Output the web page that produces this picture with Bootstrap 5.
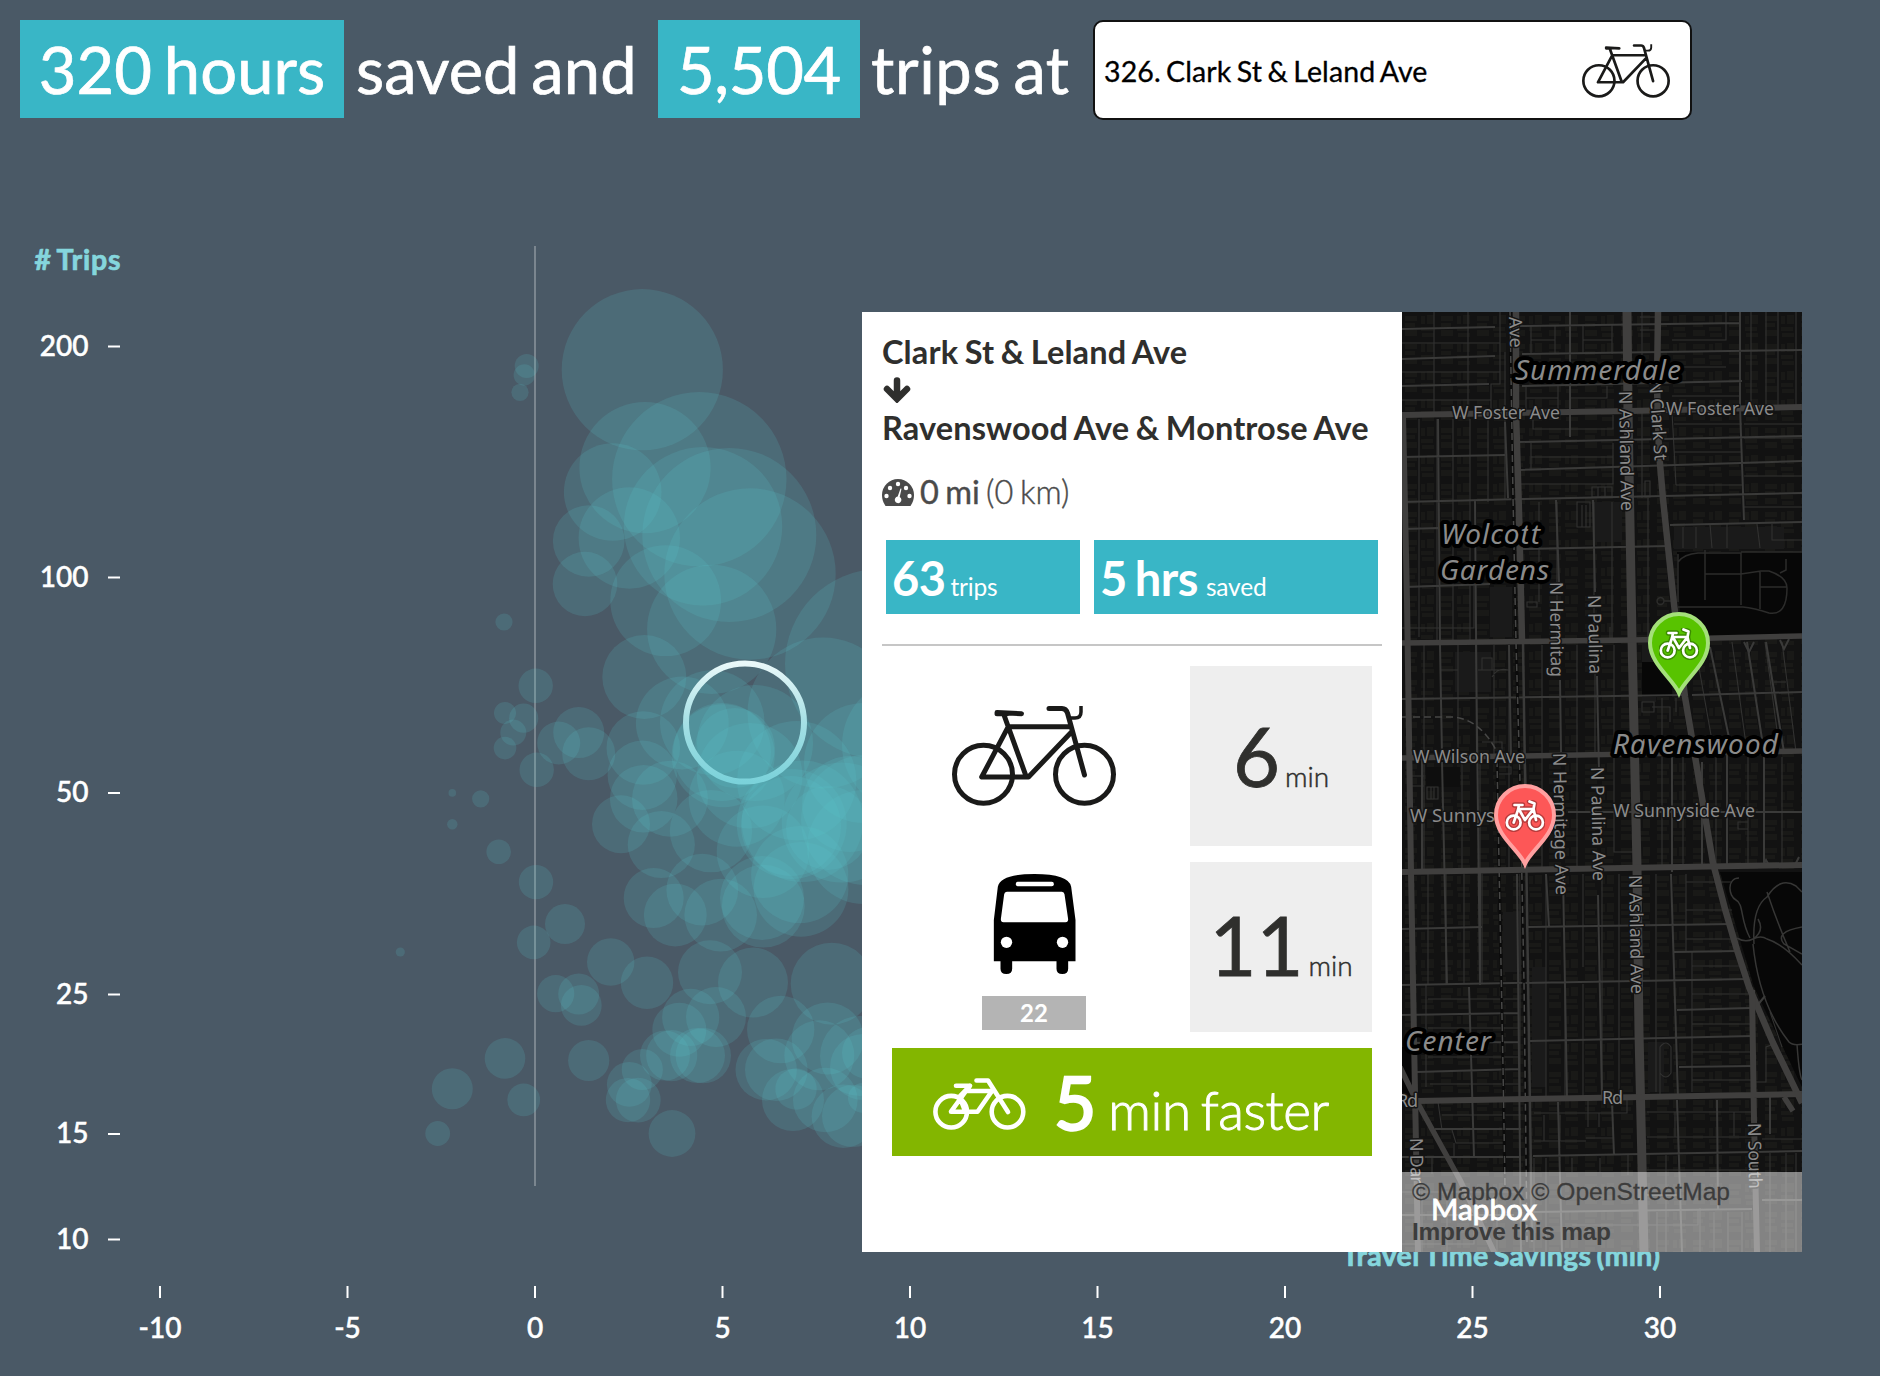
<!DOCTYPE html>
<html lang="en">
<head>
<meta charset="utf-8">
<meta name="viewport" content="width=device-width, initial-scale=1">
<title>Trips at Clark St &amp; Leland Ave</title>
<link href="https://cdn.jsdelivr.net/npm/bootstrap@5.3.0/dist/css/bootstrap.min.css" rel="stylesheet">
<script src="https://cdn.jsdelivr.net/npm/bootstrap@5.3.0/dist/js/bootstrap.bundle.min.js"></script>
<style>
body{background:#4a5966;color:#fff;font-family:Lato,sans-serif;width:1880px;height:1376px;overflow:hidden;position:relative}
.headline{height:140px;padding:20px 0 0 20px;font-size:65px;line-height:99px;white-space:nowrap;word-spacing:-5px;letter-spacing:.1px;-webkit-text-stroke:.7px currentColor}
.teal{background:#39b6c6;color:#fff}
.hl-a{width:324px;height:98px;text-align:center}
.hl-b{width:202px;height:98px;text-align:center;letter-spacing:-.3px}
.hl-t1{width:314px;padding-left:12px}
.hl-t2{width:233px;padding-left:11px;letter-spacing:.6px}
.station{width:599px;height:100px;border:2px solid #111;border-radius:10px;background:#fff;color:#000;font-size:28.500px;line-height:32px;letter-spacing:.1px;word-spacing:-2px;-webkit-text-stroke:.3px currentColor;padding:2px 20px 0 9px}
.plot{display:block;width:1880px;height:1236px}
.axis{font:500 28px Lato,sans-serif;fill:#fff;stroke:#fff;stroke-width:.5px}
.axis-title{font:700 28.500px Lato,sans-serif;fill:#85d6dd;stroke:#85d6dd;stroke-width:.7px;word-spacing:-2px}
.popcard{left:862px;top:312px;width:940px;height:940px;background:#fff;color:#2f2f2d}
.info{width:540px;height:940px;padding:20px 20px 0 20px}
.place{font-size:32.500px;font-weight:700;line-height:40px;white-space:nowrap;word-spacing:-1.500px;letter-spacing:.12px}
.arrow-row{height:36px;line-height:0;padding:5px 0 0 1px}
.dist{font-size:32.500px;line-height:40px;margin-top:24px;color:#4a4a4a;word-spacing:-2px;-webkit-text-stroke:.4px currentColor}
.dist svg{margin-right:6px}
.dist span{font-weight:300;letter-spacing:0}
.tiles{margin:28px 4px 0;gap:14px}
.tile{height:74px;padding-left:6px;line-height:76px;white-space:nowrap}
.tile b{font-size:47px;font-weight:700;letter-spacing:-.5px;word-spacing:-3px}
.tile span{font-size:24.500px;letter-spacing:-.2px}
.rule{height:2px;background:#c6c6c6;margin-top:30px}
.modes{margin:20px 10px 0 10px}
.mode-pic{width:284px}
.timebox{width:182px;background:#eee;white-space:nowrap}
.timebox b{font-size:81px;font-weight:400;line-height:80px;-webkit-text-stroke:.8px currentColor}
.timebox span{font-size:28px;font-weight:300;margin-left:5px;-webkit-text-stroke:.5px currentColor}
.route{width:104px;height:34px;background:#b4b4b4;color:#fff;font-size:24px;font-weight:700;line-height:34px;text-align:center}
.faster{height:108px;margin:16px 10px 0;background:#83b600;color:#fff;white-space:nowrap}
.faster b{font-size:73px;font-weight:400;line-height:108px;-webkit-text-stroke:2.500px currentColor}
.faster span{font-size:53px;font-weight:300;word-spacing:-4px;letter-spacing:-.4px;-webkit-text-stroke:1px currentColor}
.citymap{width:400px;height:940px;display:block}
.hood{font:italic 28px "Noto Sans",sans-serif;fill:#8b8b8b;stroke:#000;stroke-width:8px;stroke-linejoin:round;paint-order:stroke}
.road{font:18px "Noto Sans",sans-serif;fill:#8b8b8b;stroke:#141414;stroke-width:3px;stroke-linejoin:round;paint-order:stroke}
</style>
</head>
<body>
<svg width="0" height="0" class="position-absolute" aria-hidden="true">
 <symbol id="bike" viewBox="0 0 164 100">
  <g fill="none" stroke="#1a1a19" stroke-width="5" stroke-linecap="round" stroke-linejoin="round">
   <circle cx="31.5" cy="68.3" r="29"/><circle cx="132.5" cy="68.3" r="29"/>
   <path d="M45 6.5l24.500 1.200M45 7.700h10M52 9l22 61M56.300 20.700H118M56.300 20.700L29.700 71H76.500L119.500 26M97 2.500h13q4 0 5.500 4.500L132.500 69"/>
   <path d="M129 0v6q0 6-6 6h-6" stroke-width="3.500" stroke-linecap="butt"/>
  </g>
 </symbol>
 <symbol id="pinbike" viewBox="0 0 40 32">
  <g fill="none" stroke-linecap="round" stroke-linejoin="round">
   <circle cx="8.700" cy="22.500" r="6.900"/><circle cx="31" cy="22.500" r="6.900"/><path d="M9.500 5h8M14 5l-1 5L8.700 22.500M13.500 8.500L20 20L28.500 9H14M24.500 1.500l5 2L28.500 9L31 20"/>
  </g>
 </symbol>
</svg>

<header class="headline d-flex align-items-start">
 <div class="teal hl-a">320 hours</div>
 <div class="hl-t1">saved and</div>
 <div class="teal hl-b">5,504</div>
 <div class="hl-t2">trips at</div>
 <div class="station d-flex align-items-center justify-content-between"><span>326. Clark St &amp; Leland Ave</span><svg width="88" height="54"><use href="#bike"/></svg></div>
</header>

<main>
<svg class="plot" viewBox="0 140 1880 1236">
 <defs><linearGradient id="ring" x1="0" y1="0" x2="0" y2="1"><stop offset="0" stop-color="#e9f8f9"/><stop offset=".5" stop-color="#a5e0e5"/><stop offset="1" stop-color="#7bd2da"/></linearGradient></defs>
 <path d="M535 246V1186" stroke="#fff" stroke-opacity=".27" stroke-width="2"/>
 <g id="bubbles" fill="#5bc6d0" fill-opacity=".165"></g>
 <circle cx="745" cy="722.600" r="59" fill="none" stroke="url(#ring)" stroke-width="6"/>
 <text class="axis-title" x="34.500" y="270" textLength="86">#&#160;Trips</text>
 <text class="axis-title" x="1342" y="1266" textLength="318">Travel Time Savings (min)</text>
 <g id="axes" stroke="#fff" stroke-width="2"></g>
 <g id="axisText" class="axis"></g>
</svg>
</main>

<section class="popcard d-flex position-absolute">
 <div class="info">
  <div class="place">Clark St &amp; Leland Ave</div>
  <div class="arrow-row"><svg width="28" height="26" viewBox="0 0 28 26"><path d="M14 3.500V20M4 12L14 22L24 12" fill="none" stroke="#2f2f2d" stroke-width="6.500" stroke-linecap="round"/></svg></div>
  <div class="place">Ravenswood Ave &amp; Montrose Ave</div>
  <div class="dist d-flex align-items-center"><svg width="32" height="27" viewBox="0 0 32 27"><path d="M3.500 27Q0 22 0 16a16 16 0 0 1 32 0q0 6-3.500 11z" fill="#4a4a4a"/><g fill="#fff"><circle cx="4.500" cy="17" r="2.200"/><circle cx="8" cy="9" r="2.200"/><circle cx="16" cy="5" r="2.200"/><circle cx="24" cy="9" r="2.200"/><circle cx="27.500" cy="17" r="2.200"/><path d="M18.500 9.500l1 .3L17.700 18a3.300 3.300 0 1 1-2-.4z"/></g></svg>0 mi&#160;<span>(0 km)</span></div>
  <div class="tiles d-flex">
   <div class="tile teal" style="width:194px"><b>63</b><span style="margin-left:5px">trips</span></div>
   <div class="tile teal flex-grow-1"><b>5 hrs</b> <span style="margin-left:4px">saved</span></div>
  </div>
  <div class="rule"></div>
  <div class="modes d-flex justify-content-between" style="height:180px">
   <div class="mode-pic d-flex justify-content-center" style="padding-top:40px"><svg width="164" height="100" class="flex-shrink-0"><use href="#bike"/></svg></div>
   <div class="timebox d-flex justify-content-center align-items-center"><div><b>6</b><span>min</span></div></div>
  </div>
  <div class="modes d-flex justify-content-between" style="height:170px;margin-top:16px">
   <div class="mode-pic d-flex flex-column align-items-center" style="padding-top:12px">
    <svg width="83" height="100" viewBox="0 0 248 300"><path d="M2 138L14 38Q22 0 124 0T234 38L247 138V262H225V284q0 16-17.500 16T190 284V262H57V284q0 16-17.500 16T22 284V262H2z"/><g fill="#fff"><rect x="68" y="23" width="114" height="14" rx="6"/><path d="M41 53H206q7 0 8 8L225 136q0 9-8 9H31q-8 0-8-9L33 61q1-8 8-8z"/><circle cx="40" cy="205" r="17"/><circle cx="208" cy="205" r="17"/></g></svg>
    <div class="route" style="margin-top:22px">22</div>
   </div>
   <div class="timebox d-flex justify-content-center align-items-center pb-1"><div><b>11</b><span>min</span></div></div>
  </div>
  <div class="faster d-flex">
   <svg width="93" height="52" viewBox="0 0 93 52" style="margin:30px 28px 0 41px"><g fill="none" stroke="#fff" stroke-width="4.600" stroke-linecap="round" stroke-linejoin="round"><circle cx="18.200" cy="33.700" r="15.800"/><circle cx="74.500" cy="33.700" r="15.800"/><path d="M23 7.800H37L27 18M37 7.800L33 13H59L44.500 33.700H18L33 13M27 20L32 33M43.500 2.500H55L75 34"/></g></svg>
   <b>5</b><span style="margin:22px 0 0 12px">min faster</span>
  </div>
 </div>
 <svg class="citymap" viewBox="0 0 400 940">
  <defs>
   <pattern id="houses" width="36" height="28" patternUnits="userSpaceOnUse"><path d="M3 4h12v5H3zM3 11h10v4H3zM3 18h12v6H3zM19 4h4v8h-4zM25 3h7v9h-7zM19 15h12v4H19zM20 21h12v4H20z" fill="#191917"/></pattern>
  </defs>
  <rect width="400" height="940" fill="#121212"/>
  <rect width="400" height="940" fill="url(#houses)"/>
  <g fill="#1a1a1a"><path d="M88 275h22v50H88zM53 340h36v40H53zM192 190h28v40h-28zM130 655h14v120h-14zM272 215h110v22H272zM240 330h14v60h-14zM246 730h16v50h-16zM101 600h18v60h-18z"/></g>
  <g fill="#070707"><path d="M275 240H400V322L279 325zM318 560H400V775L352 675zM240 350h30v35h-30zM0 735h14v50H0z"/></g>
  <path d="M24 455h34v20H24z" fill="#0e0e0e"/>
  <g fill="none" stroke="#323231" stroke-width="1.100">
   <path d="M32 0V104M66 0V103M98 0V72h-9v28M0 31H98M0 60H98M0 88H89M129 13V42M153 13V42M129 28H153M181 13V42M210 13V42M181 28H210M124 74V103M156 74V103M124 86H156M169 86H205V74M270 28H324V0M270 55H324M270 84H338M349 0V95M364 0V95M376 0V95M394 0V95M240 0V50M238 18H254V5H238"/>
   <path d="M17 107V188M35 107V328M51 107V328M68 107V328M86 107V190M103 40V188M129 131V158M131 108V117H211V103M129 145H211M118 172H211V131M190 175h20v10h-20zM196 175v10M203 175v10M272 112H340M272 140H340M274 173H340M274 173L270 100M342 112H400M342 126H400M342 164H400M342 195H400M240 100V186M243 169h5v16h-5zM308 212L310 236M325 212V236M355 212L358 236M370 212V228H400M17 188V325M137 190V290M155 190V328M192 190V328M210 190V328M246 186V328M175 190h13v25h-13zM180 193v22M184 193v22M281 215V236M294 215V236M0 316H72V274M208 315V328M125 290h10v5h-10z"/>
   <path d="M22 333V443M56 333V443M92 333V443M107 333V560M140 333V443M175 333V443M193 333V443M212 333V443M76 358H107M90 365q6-10 16-7M80 346h10v12H80zM38 358H56M260 386V440M274 386V400M240 390h12v10h-12zM250 395h18v15M296 350L312 440M330 330L345 440M363 330L378 440M380 330L394 440M22 450V558M60 450V558M78 450V558M140 445V558M175 445V558M212 445V540H231M260 445V556M281 445V556M314 445V556M346 445V556M380 445V556M10 464h12v10H10M25 475h11v12H25zM29 475v12M32 475v12M336 510h10v7h-10zM372 370h12M80 430h20v14H80M97 455h12v7H97"/>
   <path d="M26 562V672M44 562V672M62 562V672M80 562V672M144 562V786M181 562V655M200 562V786M217 562V786M254 562V780M284 562V640M284 570H330M284 598H330M284 627H335M290 640V780M290 654H340M290 682H350M290 712H350M290 740H350M290 768H350M24 673V775M26 687H116M26 716H116M26 745H116M28 772H118M118 562V786M163 672V786M181 672V786M258 735q6-8 11 0v26q-5 8-11 0zM258 760v22M368 700L380 735M352 770H364V735L372 732M40 803H70M36 790L40 818M50 818L54 831H102M70 803H119M52 831V845M132 801H225V786M142 803V829M158 803V829M197 801V815M132 829H184M184 826H212M186 815V786M245 800H350M273 800V825M332 800V824M245 825H350M360 827H400M384 841V940M394 841V940M368 841V940M30 846V862M144 846V940M170 846V860M198 846V860M226 843V863M245 858H350M264 843V940M132 940V846M0 880H119M0 932H72V880M255 900V940M298 896V940M312 900V940M326 900V940M340 900V940M170 913H225M220 913H296V898M20 880V940M45 880V940M95 880V940"/>
   <path d="M276 242V290M276 250q6-8 20-9h43V293M303 238V288M303 262H339l20-3h8q18 6 18 17 0 28-18 25-15-5-26-6H276M358 260V297M358 275H385M339 240H400M384 247V258l-6 3M262 289a3.500 3.500 0 1 0 0 .1h10" stroke="#2c2c2b" stroke-width="1.500"/>
   <path d="M337 566c-12 0-11 18-3 22s4 20 14 38M352 632Q350 595 365 585Q378 564 394 574L400 580M365 580Q375 610 388 640M400 615Q372 620 382 632L400 642M335 626q8 5 16 1t14 0q16 5 35 26M351 627q12-8 5-20M351 632q6 60 36 98 4 4 14 2M395 732q2 30 5 36" stroke="#363635" stroke-width="1.500"/>
  </g>
  <g fill="none" stroke="#3a3a39" stroke-width="2">
   <path d="M0 17L93 15M0 47L93 44M0 74L87 72M118 14L338 11M120 42L400 38M120 74L340 69M168 0V125M338 0V95L342 208M0 145L103 143M0 190L120 187M118 130L400 124M118 158L400 149M120 187L400 181M268 213L400 210M2 217L36 216M120 237L266 234M3 275L88 272M36 107L38 328M73 188L75 443M154 188L157 270M191 188L193 280M103 110L106 186M0 387L283 383M290 383L400 380M38 333L40 443M74 333L78 673M107 333L109 445M158 368L159 440M195 364L197 460M123 448L124 500M308 335L330 440M345 330L362 440M364 330L382 440M20 443V560M40 450L45 673M166 500H400M270 443V560M300 450V556M325 443V556M362 440V553M78 560V673"/>
   <path d="M0 617L80 615M126 615L330 612M0 673L345 667M128 729L350 724M0 703L116 701M2 731L116 730M15 760L118 757M272 640L335 639M275 698L348 696M277 755L350 754M67 675L72 845M161 562L165 786M196 583L200 786M144 562L147 615M269 562L276 786M115 562L119 940M33 817H119M0 845H119M131 844L400 839M156 790L160 940M210 790L212 843M275 788L280 940M315 788L316 897M130 900L350 897M368 785V822M0 903H112M360 888H400M245 883H275M363 684L354 695M342 330L347 340L352 330M378 328L382 337L387 327M360 555L364 548L368 555M393 553L397 545"/>
   <path d="M121 330L130 930" stroke-width="2.500"/>
  </g>
  <g fill="none" stroke="#0b0b0b" stroke-width="3"><path d="M108 0L111 185L114 330L118 470L122 671L125 870M95 448L101 755L103 875"/></g>
  <g fill="none" stroke="#474746" stroke-width="1.500" stroke-dasharray="7 4"><path d="M108 0L111 185L114 330L118 470L122 671L125 930M95 448L101 755L103 875M0 405H52Q78 408 94 438"/></g>
  <g fill="none" stroke="#403f3e" stroke-linejoin="round">
   <path d="M114 0V100L117 200L120 328" stroke-width="6.500"/>
   <path d="M1 104L5 288L9 560L13 780L16 940" stroke-width="6"/>
   <path d="M225 0L226 100L230 326L235 555L237 721L242 940" stroke-width="9"/>
   <path d="M256 0L255 75L257 140L261 187L272 292L283 385L311 551L323 597L335 638L347 675L371 731L400 791" stroke-width="6.500"/>
   <path d="M0 103L228 99L400 95M0 560L165 557L400 553M15 789L185 786L400 782M350 678L352 808L355 940" stroke-width="6"/>
   <path d="M0 331L231 328L400 324M0 446L231 442L400 439" stroke-width="5.500"/>
   <path d="M-2 755L14 788L58 868L93 942M382 785L391 799" stroke-width="5.500"/>
  </g>
  <g class="road">
   <text x="50" y="107" textLength="108" lengthAdjust="spacingAndGlyphs">W Foster Ave</text><text x="264" y="103" textLength="108" lengthAdjust="spacingAndGlyphs">W Foster Ave</text>
   <text x="11" y="451" textLength="112" lengthAdjust="spacingAndGlyphs">W Wilson Ave</text><text x="8" y="510" textLength="85" lengthAdjust="spacingAndGlyphs">W Sunnys</text><text x="211" y="505" textLength="142" lengthAdjust="spacingAndGlyphs">W Sunnyside Ave</text>
   <text x="200" y="792" textLength="21">Rd</text><text x="-5" y="795" textLength="21">Rd</text>
   <text transform="translate(107 5) rotate(88)" textLength="31">Ave</text>
   <text transform="translate(217 79) rotate(89)" textLength="120" lengthAdjust="spacingAndGlyphs">N Ashland Ave</text>
   <text transform="translate(247 69) rotate(86)" textLength="80" lengthAdjust="spacingAndGlyphs">N Clark St</text>
   <text transform="translate(148 270) rotate(89.500)" textLength="95" lengthAdjust="spacingAndGlyphs">N Hermitag</text>
   <text transform="translate(186 283) rotate(89)" textLength="79" lengthAdjust="spacingAndGlyphs">N Paulina</text>
   <text transform="translate(151 441) rotate(88.800)" textLength="142" lengthAdjust="spacingAndGlyphs">N Hermitage Ave</text>
   <text transform="translate(189 455) rotate(89)" textLength="114" lengthAdjust="spacingAndGlyphs">N Paulina Ave</text>
   <text transform="translate(227 563) rotate(89)" textLength="119" lengthAdjust="spacingAndGlyphs">N Ashland Ave</text>
   <text transform="translate(8 826) rotate(89)" textLength="46">N Dar</text>
   <text transform="translate(346 811) rotate(89)" textLength="66">N South</text>
  </g>
  <g class="hood">
   <text x="113" y="67.500" textLength="166">Summerdale</text><text x="39" y="231.500" textLength="99">Wolcott</text><text x="38" y="267.500" textLength="109">Gardens</text>
   <text x="211" y="441.500" textLength="165">Ravenswood</text><text x="3" y="738.500" textLength="86">Center</text>
  </g>
  <g stroke-width="4"><path d="M277 381C271 367 248 352 248 331a29 29 0 0 1 58 0C306 352 283 367 277 381z" fill="#58c300" stroke="#a4e07a"/><path d="M123 552C117 538 94 524 94 503a29 29 0 0 1 58 0C152 524 129 538 123 552z" fill="#fd5757" stroke="#ffa0a0"/></g>
  <use href="#pinbike" x="257" y="316" width="40" height="32" stroke="#3c8a00" stroke-width="5.500"/><use href="#pinbike" x="257" y="316" width="40" height="32" stroke="#fff" stroke-width="2.700"/>
  <use href="#pinbike" x="103" y="488" width="40" height="32" stroke="#b83c3c" stroke-width="5.500"/><use href="#pinbike" x="103" y="488" width="40" height="32" stroke="#fff" stroke-width="2.700"/>
  <rect y="860" width="400" height="80" fill="#fff" fill-opacity=".48"/>
  <g font-family="Liberation Sans,Arial,sans-serif" font-size="24.500" fill="#3c3c3c"><text x="10" y="888" textLength="318" stroke="#3c3c3c" stroke-width=".3">© Mapbox © OpenStreetMap</text><text x="10" y="928" font-weight="700" textLength="199">Improve this map</text></g>
  <text x="29" y="908" font-family="Lato,sans-serif" font-weight="400" font-size="29.500" fill="#fff" stroke="#fff" stroke-width=".9" textLength="106">Mapbox</text>
 </svg>
</section>

<script>
const NS="http://www.w3.org/2000/svg";
const add=(p,t,a,s)=>{const e=document.createElementNS(NS,t);for(const k in a)e.setAttribute(k,a[k]);if(s)e.textContent=s;p.appendChild(e)};
// each bubble: x, y, radius
const trips=[[642.3,369.7,80.6],[526.7,366,12],[524.3,375,10.7],[520,392.3,8.6],[645,467.7,65.6],[699.3,479.3,87.2],[612.7,492,48.8],[703,526.3,79.2],[729.3,535,87],[629.3,538,50.7],[588.7,541,35.8],[585,584,32.3],[750,574,85.7],[665.7,600.7,55.4],[711.7,629.3,64.6],[504,622,8.6],[644.3,677,42],[880,664,95],[823,713,75.5],[535.7,685.8,17.2],[505,713,11],[523.7,718.2,14.6],[513.3,732.6,13],[505,748.1,11.3],[578.7,732.6,25.5],[558.7,743,21.5],[588.7,753.7,26.5],[536.7,769.8,17.2],[452.3,792.9,3.8],[480.7,798.8,8.6],[452.3,824.3,5.2],[498.7,851.8,12.3],[536,882.1,17.2],[565,924.1,20],[533.7,942.4,16.8],[400.3,952,4.6],[610.7,962,23.7],[647,982.7,26.2],[555.7,993.7,18.6],[578.7,994,20.5],[581.3,1005.4,20.4],[505,1058.4,20.3],[452.3,1088.8,20.5],[523.7,1099.8,16.4],[437.7,1133.5,12.4],[588.7,1060.5,20.6],[642.3,1069.5,20.6],[629.3,1084.3,22.4],[628,1100.1,22.2],[638.3,1100.1,22.4],[672,1133.5,23.4],[682.3,723,46.4],[712.3,722.6,52.3],[723.2,755.7,51.5],[722,752,49],[735,748,40],[755,743,58],[643.3,748,36.8],[642.3,775.3,34.7],[643.7,798.7,33.8],[670,798.7,38],[621,824.2,29],[661.3,844.5,33.6],[711,831.1,41.2],[749.7,775.7,52.8],[736.7,798.7,48],[653.7,898,30],[675.3,915.1,31.4],[702.3,889.7,35.9],[720.7,915.1,36.3],[763.3,906.2,41.4],[762,898,42],[763,851.7,46.3],[801,889.3,47.4],[799.7,874.5,48.6],[802.3,821.3,60.7],[791.7,824,55],[841.7,822.5,60],[866,820,65],[864,847,57],[910,745,68],[864,763,60],[796.7,780.7,59.7],[850,804,48],[791,826,50],[828,828,42],[710,972.3,32],[753,982.6,35],[831.7,983.7,41],[690.7,1017.4,28.6],[679.3,1029.8,27],[716,1017,30],[665,1055.6,25],[671.7,1055.6,25.6],[697.5,1055.6,27.5],[703.3,1055.6,27.7],[780.7,1029.5,33.7],[766.2,1069.7,30.7],[776.3,1069.7,31.3],[827.7,1038.4,36],[819.3,1055.3,35],[793,1100,31],[796,1089,20.7],[825.3,1100,32.3],[843.3,1116.3,31.7],[853,1116,31],[860,1056,40],[868,1053,26],[863,1067,33],[863,1098,15]];
for(const [cx,cy,r] of trips)add(bubbles,"circle",{cx,cy,r});
for(const [v,y] of [[200,346.5],[100,577.5],[50,793],[25,994.5],[15,1134],[10,1239.5]]){
 add(axes,"path",{d:`M108 ${y}h12`});
 add(axisText,"text",{x:88.5,y:y+9,"text-anchor":"end"},String(v));
}
for(let v=-10;v<=30;v+=5){
 const x=535+v*37.5;
 add(axes,"path",{d:`M${x} 1286v12`});
 add(axisText,"text",{x,y:1338,"text-anchor":"middle"},String(v));
}
</script>
</body>
</html>
